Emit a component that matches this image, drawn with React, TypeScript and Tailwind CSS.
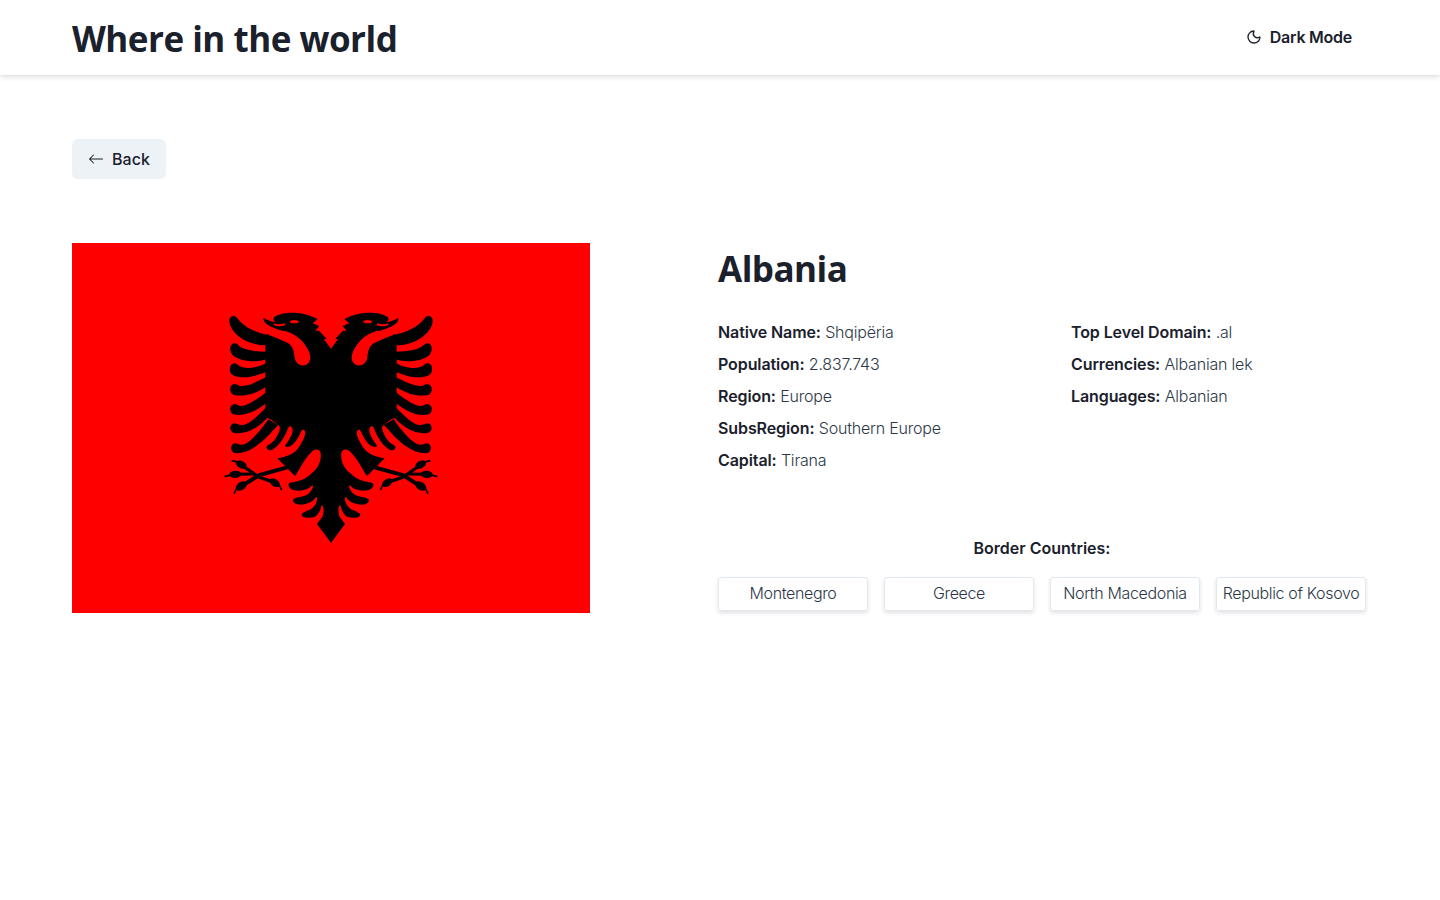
import { Moon } from "lucide-react";
import { BsArrowLeft } from "react-icons/bs";

const borders = ["Montenegro", "Greece", "North Macedonia", "Republic of Kosovo"];

const leftFacts = [
  ["Native Name:", "Shqipëria"],
  ["Population:", "2.837.743"],
  ["Region:", "Europe"],
  ["SubsRegion:", "Southern Europe"],
  ["Capital:", "Tirana"],
];

const rightFacts = [
  ["Top Level Domain:", ".al"],
  ["Currencies:", "Albanian lek"],
  ["Languages:", "Albanian"],
];

// Half of the eagle, traced from the flag; mirrored around x = 393.
const blackParts = [
  // head, body, the slots under the wing, leg and tail
  "M394 178 L372 148 L380 146 L357 122 L346 122 L358 108 L338 100 L353 87 C335 78 310 68 280 68 C255 68 235 72 222 82 C218 88 222 94 228 97 C215 95 200 90 192 84 C188 88 192 96 200 102 C208 108 216 112 222 113 C230 118 245 122 256 124 L200 133 L196 170 L196 380 L215 390 L235 405 C242 410 240 420 236 428 C228 445 220 458 203 466 C196 472 200 482 212 481 C230 476 250 450 262 420 C265 410 270 407 274 410 C280 415 278 425 276 432 C270 445 262 458 256 465 C254 472 262 472 272 468 C285 458 295 445 303 425 C306 418 312 418 315 424 C318 435 310 450 298 470 C285 490 262 500 232 505 L285 558 C295 545 310 510 335 485 C345 476 360 476 362 490 C365 510 355 535 335 550 C320 565 300 575 270 578 C262 582 265 595 280 600 C300 605 325 600 337 585 C342 590 335 605 320 615 C305 622 290 620 280 628 C275 640 295 648 315 642 C330 638 342 632 348 620 C355 625 350 640 340 652 C330 662 315 662 305 672 C305 685 325 686 345 680 C355 675 362 660 365 645 C372 650 372 665 368 678 C362 690 355 695 351 702 L394 760 Z",
  // wing feathers, top to bottom
  "M100 78 C88 78 86 92 90 104 C102 140 150 165 196 166 L205 135 C165 128 130 110 112 85 C108 79 104 78 100 78 Z",
  "M104 160 C88 160 86 185 100 197 C125 215 170 218 200 208 L205 185 C170 186 130 180 114 165 C110 161 107 160 104 160 Z",
  "M104 220 C88 220 84 245 98 255 C125 270 170 258 200 245 L205 215 C180 232 140 240 118 228 C112 223 108 220 104 220 Z",
  "M104 282 C88 282 86 308 100 314 C130 322 170 310 198 290 L205 258 C175 272 145 290 120 288 C114 286 110 282 104 282 Z",
  "M104 342 C88 342 86 368 100 373 C140 382 180 355 203 335 L205 302 C180 320 150 345 125 348 C115 348 110 342 104 342 Z",
  "M104 400 C88 400 86 425 102 429 C145 435 185 405 207 378 L205 345 C185 365 155 400 130 405 C118 407 110 400 104 400 Z",
  "M106 460 C90 460 88 486 106 490 C150 492 190 455 225 415 L235 405 L205 388 C190 410 160 450 135 462 C122 468 112 460 106 460 Z",
];

const talonBlobs = [
  [124, 524, 17, 11, 25],
  [106, 553, 18, 11, -5],
  [124, 588, 18, 12, -35],
  [224, 578, 17, 11, 35],
];

function Talons() {
  return (
    <>
      <path d="M262 532 L178 555 L122 590" fill="none" stroke="#000" strokeWidth="12" />
      <path d="M120 522 L178 562 L226 578" fill="none" stroke="#000" strokeWidth="10" />
      <path d="M104 553 L165 552" fill="none" stroke="#000" strokeWidth="9" />
      <path d="M95 512 L130 520 M74 560 L100 553 M102 612 L112 590 M245 600 L232 575" fill="none" stroke="#000" strokeWidth="5" />
      {talonBlobs.map(([cx, cy, rx, ry, a]) => (
        <ellipse key={`${cx}-${cy}`} cx={cx} cy={cy} rx={rx} ry={ry} transform={`rotate(${a} ${cx} ${cy})`} fill="#000" />
      ))}
    </>
  );
}

function Eagle() {
  return (
    <>
      {blackParts.map((d, i) => (
        <path key={i} d={d} fill="#000" />
      ))}
      <Talons />
      {/* neck curl, open towards the beak */}
      <path
        d="M204 130 L254 122 C278 128 305 145 320 172 C332 190 336 212 322 222 C308 232 290 224 285 208 C281 190 284 170 262 158 C245 150 225 142 206 135 Z"
        fill="#f00"
      />
      {/* mouth */}
      <path d="M220 100 C232 104 244 104 254 100 L256 106 C244 110 232 110 222 106 Z" fill="#f00" />
      <ellipse cx="283" cy="95" rx="13" ry="5" fill="#f00" />
    </>
  );
}

function Flag() {
  return (
    <svg viewBox="-384 -141 1554 1110" className="h-[370px] w-[518px] shrink-0">
      <rect x="-384" y="-141" width="1554" height="1110" fill="#f00" />
      <Eagle />
      <g transform="translate(786 0) scale(-1 1)">
        <Eagle />
      </g>
    </svg>
  );
}

function Fact({ label, value }: { label: string; value: string }) {
  return (
    <p className="h-6 text-[16px] leading-6 font-light tracking-[-0.2px] text-[#2d3748]">
      <span className="font-semibold tracking-[-0.1px] text-[#1a202c]">{label}</span> {value}
    </p>
  );
}

export default function App() {
  return (
    <div className="min-h-[900px] bg-white font-['Inter',sans-serif] text-[#1a202c]">
      <header className="flex h-[75px] items-center justify-between pr-[88px] pl-[72px] shadow-[0_1px_6px_rgba(0,0,0,0.18)]">
        <h1 className="pt-[4px] font-['Open_Sans',sans-serif] text-[35px] font-bold tracking-[-0.5px]">
          Where in the world
        </h1>
        <button type="button" className="-mt-[1px] flex items-center gap-2 text-[16px] font-semibold tracking-[-0.25px]">
          <Moon size={16} strokeWidth={2} />
          Dark Mode
        </button>
      </header>

      <main className="px-[72px] pt-[64px]">
        <button
          type="button"
          className="flex h-10 w-[94px] items-center justify-center gap-2 rounded-md bg-[#edf2f7] text-[16px] font-medium"
        >
          <BsArrowLeft size={16} />
          Back
        </button>

        <div className="mt-[64px] flex gap-[128px]">
          <Flag />

          <section className="w-[648px]">
            <h2 className="font-['Open_Sans',sans-serif] text-[35px] leading-[52px] font-bold tracking-[-0.5px]">
              Albania
            </h2>

            <div className="mt-[25px] flex">
              <div className="flex w-[353px] flex-col gap-2">
                {leftFacts.map(([label, value]) => (
                  <Fact key={label} label={label} value={value} />
                ))}
              </div>
              <div className="flex flex-col gap-2">
                {rightFacts.map(([label, value]) => (
                  <Fact key={label} label={label} value={value} />
                ))}
              </div>
            </div>

            <p className="mt-[64px] text-center text-[16px] leading-6 font-semibold">
              Border Countries:
            </p>
            <div className="mt-[17px] flex gap-4">
              {borders.map((name) => (
                <span
                  key={name}
                  className="flex h-[34px] w-[150px] items-center justify-center rounded-[3px] border border-[#e2e8f0] pb-[2px] text-[16px] font-light tracking-[-0.35px] whitespace-nowrap text-[#2d3748] shadow-[0_2px_4px_rgba(0,0,0,0.12)]"
                >
                  {name}
                </span>
              ))}
            </div>
          </section>
        </div>
      </main>
    </div>
  );
}
